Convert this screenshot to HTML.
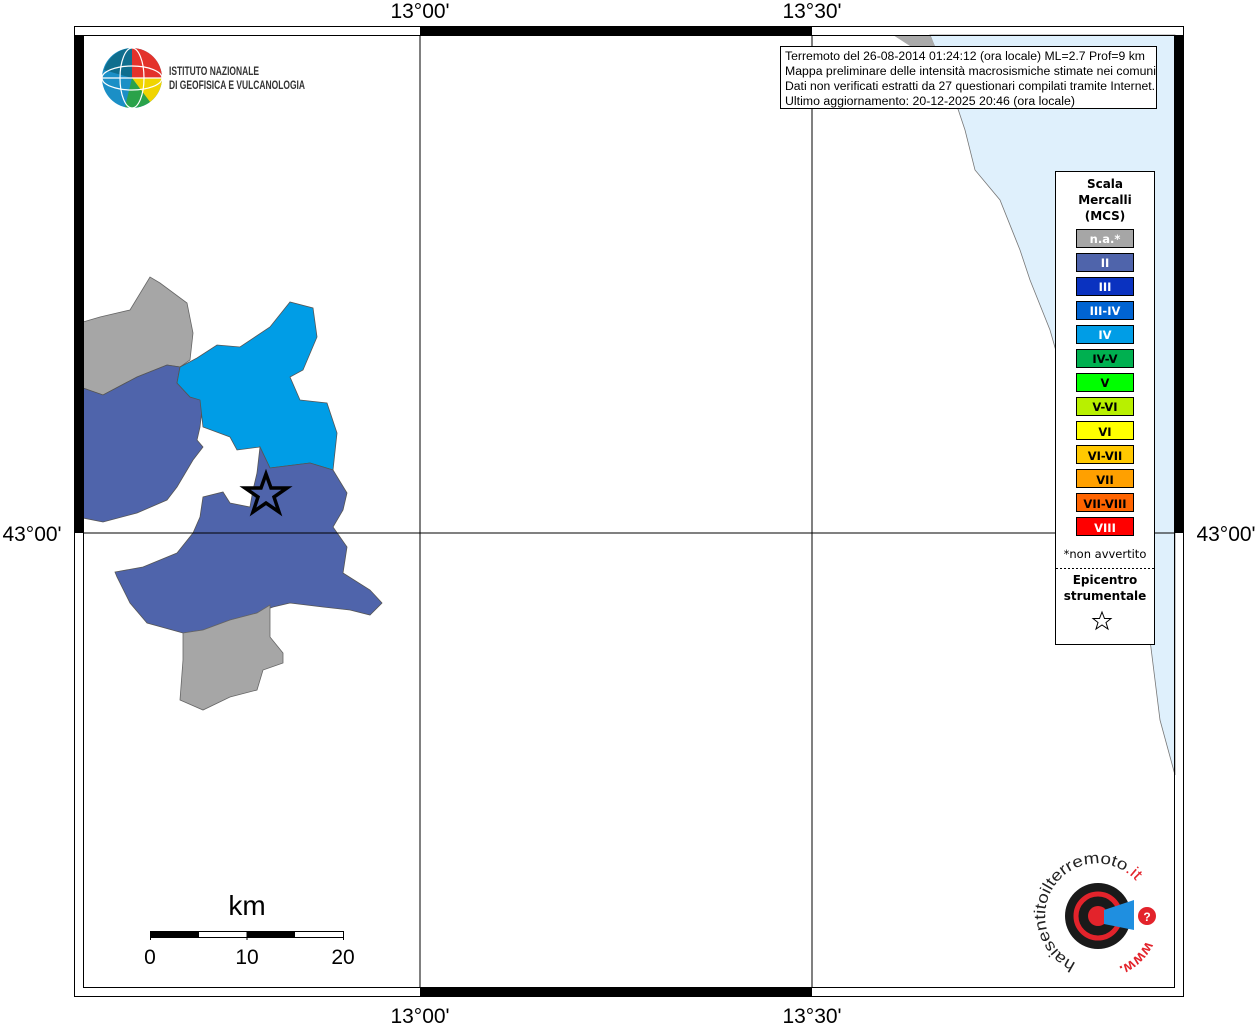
<!DOCTYPE html>
<html><head><meta charset="utf-8"><style>
body{margin:0;background:#fff;width:1257px;height:1024px;overflow:hidden;font-family:"Liberation Sans",sans-serif}
</style></head><body>
<svg width="1257" height="1024" viewBox="0 0 1257 1024" xmlns="http://www.w3.org/2000/svg" style="position:absolute;left:0;top:0">
<rect x="83" y="35" width="1092" height="953" fill="#fff"/>
<polygon points="930,35 1175,35 1175,775 1160,720 1150,640 1130,580 1110,520 1090,460 1070,400 1050,330 1030,280 1020,250 1000,200 975,170 965,130 955,100 940,60" fill="#dff0fc" stroke="#777" stroke-width="0.8"/>
<polygon points="893,35 930,35 935,46 910,46" fill="#aaa"/>
<polygon points="83,322 100,317 130,310 150,277 160,283 187,303 193,333 190,360 180,367 167,365 137,377 103,395 83,388" fill="#a6a6a6" stroke="#666" stroke-width="0.8"/>
<polygon points="83,388 103,395 137,377 167,365 180,367 177,383 190,397 203,400 200,427 197,440 203,447 193,460 177,487 167,500 137,513 103,522 83,518" fill="#4f64ab" stroke="#555" stroke-width="0.8"/>
<polygon points="180,367 197,358 217,345 240,347 270,327 290,302 313,308 317,337 303,370 290,377 300,400 327,403 337,433 333,470 310,463 270,468 260,447 237,450 230,437 203,427 200,400 190,397 177,383" fill="#009de6" stroke="#555" stroke-width="0.8"/>
<polygon points="260,447 270,468 310,463 333,470 347,493 343,510 333,527 347,547 343,573 370,590 382,603 370,615 350,610 323,607 290,603 273,607 257,613 230,620 203,630 183,633 147,623 130,603 117,577 115,572 143,567 177,553 193,533 200,517 203,497 223,492 230,503 250,507 253,490 257,473" fill="#4f64ab" stroke="#555" stroke-width="0.8"/>
<polygon points="183,633 203,630 230,620 257,613 270,605 270,637 283,653 283,663 263,670 257,690 230,697 203,710 180,700 183,660" fill="#a6a6a6" stroke="#666" stroke-width="0.8"/>
<line x1="420" y1="35" x2="420" y2="988" stroke="#000" stroke-width="1"/>
<line x1="812" y1="35" x2="812" y2="988" stroke="#000" stroke-width="1"/>
<line x1="83" y1="533" x2="1175" y2="533" stroke="#000" stroke-width="1"/>
<rect x="74.5" y="26.5" width="1109" height="970" fill="none" stroke="#000"/>
<rect x="83.5" y="35.5" width="1091" height="952" fill="none" stroke="#000"/>
<rect x="74" y="35" width="9" height="498" fill="#000"/>
<rect x="1175" y="35" width="9" height="498" fill="#000"/>
<rect x="420" y="26" width="392" height="9" fill="#000"/>
<rect x="420" y="988" width="392" height="9" fill="#000"/>
<polygon points="266,474 271,488 287,488 274,497 279,512 266,503 253,512 258,497 245,488 261,488" fill="#4f64ab" stroke="#000" stroke-width="3.5"/>
<g font-size="21" fill="#000" text-anchor="middle">
<text x="420" y="18">13°00'</text><text x="812" y="18">13°30'</text>
<text x="420" y="1023">13°00'</text><text x="812" y="1023">13°30'</text>
<text x="32" y="541">43°00'</text><text x="1226" y="541">43°00'</text>
</g>
<rect x="780.5" y="46.5" width="376" height="62" fill="#fff" stroke="#000"/>
<g font-size="11.5" fill="#000">
<text x="785" y="60" textLength="360" lengthAdjust="spacingAndGlyphs">Terremoto del 26-08-2014 01:24:12 (ora locale) ML=2.7 Prof=9 km</text>
<text x="785" y="75" textLength="371" lengthAdjust="spacingAndGlyphs">Mappa preliminare delle intensità macrosismiche stimate nei comuni</text>
<text x="785" y="90" textLength="370" lengthAdjust="spacingAndGlyphs">Dati non verificati estratti da 27 questionari compilati tramite Internet.</text>
<text x="785" y="105" textLength="290" lengthAdjust="spacingAndGlyphs">Ultimo aggiornamento: 20-12-2025 20:46 (ora locale)</text>
</g>
<circle cx="132" cy="78" r="30" fill="#1b8fc6"/>
<path d="M132 48 A30 30 0 0 1 162 78 L132 78Z" fill="#e3322b"/>
<path d="M162 78 A30 30 0 0 1 150 102 L132 78Z" fill="#f0d400"/>
<path d="M150 102 A30 30 0 0 1 125 107 L132 78Z" fill="#2aa24a"/>
<path d="M104 70 A30 30 0 0 1 132 48 L132 78Z" fill="#0f6e8e"/>
<g stroke="#fff" stroke-width="1.2" fill="none"><ellipse cx="132" cy="78" rx="12" ry="30"/><line x1="102" y1="78" x2="162" y2="78"/><ellipse cx="132" cy="78" rx="30" ry="12"/></g>
<text x="169" y="75" font-size="12" font-weight="bold" fill="#333" textLength="90" lengthAdjust="spacingAndGlyphs">ISTITUTO NAZIONALE</text>
<text x="169" y="89" font-size="12" font-weight="bold" fill="#333" textLength="136" lengthAdjust="spacingAndGlyphs">DI GEOFISICA E VULCANOLOGIA</text>
<rect x="1055.5" y="171.5" width="99" height="473" fill="#fff" stroke="#000"/>
<g font-size="12" font-weight="bold" text-anchor="middle" font-family="DejaVu Sans,sans-serif">
<text x="1105" y="188">Scala</text><text x="1105" y="204">Mercalli</text><text x="1105" y="220">(MCS)</text>
<g stroke="#000" stroke-width="1">
<rect x="1076.5" y="229.5" width="57" height="18" fill="#a6a6a6"/>
<rect x="1076.5" y="253.5" width="57" height="18" fill="#4f64ab"/>
<rect x="1076.5" y="277.5" width="57" height="18" fill="#0a32c0"/>
<rect x="1076.5" y="301.5" width="57" height="18" fill="#0064d2"/>
<rect x="1076.5" y="325.5" width="57" height="18" fill="#009de6"/>
<rect x="1076.5" y="349.5" width="57" height="18" fill="#00b050"/>
<rect x="1076.5" y="373.5" width="57" height="18" fill="#00ff00"/>
<rect x="1076.5" y="397.5" width="57" height="18" fill="#b8f000"/>
<rect x="1076.5" y="421.5" width="57" height="18" fill="#ffff00"/>
<rect x="1076.5" y="445.5" width="57" height="18" fill="#ffc800"/>
<rect x="1076.5" y="469.5" width="57" height="18" fill="#ffa000"/>
<rect x="1076.5" y="493.5" width="57" height="18" fill="#ff6400"/>
<rect x="1076.5" y="517.5" width="57" height="18" fill="#ff0000"/>
</g>
<g font-size="11.5">
<text x="1105" y="243" fill="#fff">n.a.*</text>
<text x="1105" y="267" fill="#fff">II</text>
<text x="1105" y="291" fill="#fff">III</text>
<text x="1105" y="315" fill="#fff">III-IV</text>
<text x="1105" y="339" fill="#fff">IV</text>
<text x="1105" y="363" fill="#000">IV-V</text>
<text x="1105" y="387" fill="#000">V</text>
<text x="1105" y="411" fill="#000">V-VI</text>
<text x="1105" y="436" fill="#000">VI</text>
<text x="1105" y="460" fill="#000">VI-VII</text>
<text x="1105" y="484" fill="#000">VII</text>
<text x="1105" y="508" fill="#000">VII-VIII</text>
<text x="1105" y="532" fill="#fff">VIII</text>
</g>
<text x="1105" y="558" font-size="11.5" font-weight="normal">*non avvertito</text>
<line x1="1056" y1="568.5" x2="1154" y2="568.5" stroke="#000" stroke-dasharray="2,2"/>
<text x="1105" y="584">Epicentro</text><text x="1105" y="600">strumentale</text>
</g>
<polygon points="1102,612 1104.5,618.5 1111,618.5 1106,622.5 1108,629 1102,625 1096,629 1098,622.5 1093,618.5 1099.5,618.5" fill="#fff" stroke="#000" stroke-width="1"/>
<text x="247" y="915" font-size="28" text-anchor="middle">km</text>
<rect x="150.5" y="931.5" width="193" height="6" fill="#fff" stroke="#000"/>
<rect x="150" y="931" width="49" height="6" fill="#000"/>
<rect x="247" y="931" width="48" height="6" fill="#000"/>
<line x1="150.5" y1="931" x2="150.5" y2="940" stroke="#000"/><line x1="247" y1="931" x2="247" y2="940" stroke="#000"/><line x1="343.5" y1="931" x2="343.5" y2="940" stroke="#000"/>
<g font-size="21" text-anchor="middle"><text x="150" y="964">0</text><text x="247" y="964">10</text><text x="343" y="964">20</text></g>
<circle cx="1098" cy="916" r="33" fill="#1a1a1a"/>
<circle cx="1098" cy="916" r="22" fill="none" stroke="#e3232b" stroke-width="5"/>
<circle cx="1098" cy="916" r="10" fill="#e3232b"/>
<polygon points="1104,910 1134,900 1134,930 1104,924" fill="#1f8fe0"/>
<circle cx="1147" cy="916" r="9" fill="#e3232b"/>
<text x="1147" y="921" font-size="12" fill="#fff" text-anchor="middle" font-weight="bold">?</text>
<path id="arc" d="M1076,963 A52 52 0 1 1 1143,891" fill="none"/>
<text font-size="16" fill="#222"><textPath href="#arc" textLength="185" lengthAdjust="spacingAndGlyphs">haisentitoilterremoto<tspan fill="#e3232b">.it</tspan></textPath></text>
<path id="arc2" d="M1146,941 A50 50 0 0 1 1090,969" fill="none"/>
<text font-size="15" fill="#e3232b" font-weight="bold"><textPath href="#arc2">www.</textPath></text>
</svg>
</body></html>
